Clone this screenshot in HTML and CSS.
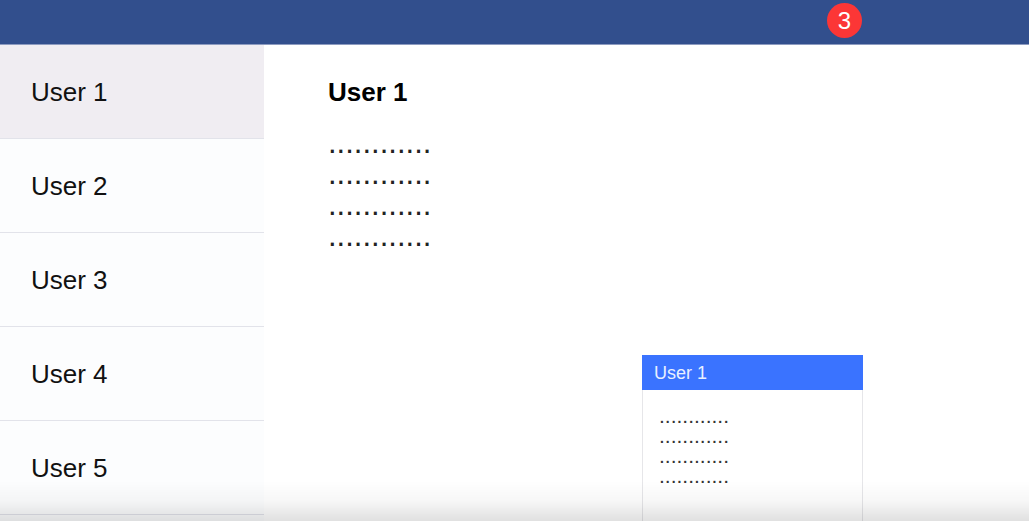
FILE: index.html
```html
<!DOCTYPE html>
<html lang="en">
<head>
<meta charset="utf-8">
<meta name="viewport" content="width=device-width, initial-scale=1">
<title>Messages</title>
<link rel="stylesheet" href="styles.css">
</head>
<body>
<header class="topbar"><span class="badge">3</span></header>
<div class="layout">
  <nav class="users">
    <button class="user user-active" type="button">User 1</button>
    <button class="user" type="button">User 2</button>
    <button class="user" type="button">User 3</button>
    <button class="user" type="button">User 4</button>
    <button class="user" type="button">User 5</button>
  </nav>
  <main class="thread">
    <h1 class="thread-title">User 1</h1>
    <p class="messages">............<br>............<br>............<br>............</p>
  </main>
</div>
<section class="chat">
  <h2 class="chat-title">User 1</h2>
  <p class="chat-messages">............<br>............<br>............<br>............</p>
</section>
<div class="shade"></div>
</body>
</html>
```
FILE: styles.css
```css
* {
  box-sizing: border-box;
}

body {
  display: flex;
  flex-direction: column;
  min-height: 100vh;
  margin: 0;
  background: #fff;
  color: #000;
  font-family: "Liberation Sans", Arial, sans-serif;
}

h1, h2, p {
  margin: 0;
}

.topbar {
  display: flex;
  justify-content: flex-end;
  padding: 3px 167px 6px 0;
  border-bottom: 1px solid #8d9bc0;
  background: #324f8d;
}

.badge {
  width: 35px;
  height: 35px;
  border-radius: 50%;
  background: #fc3636;
  color: #fff;
  font-size: 24px;
  line-height: 36px;
  text-align: center;
}

.layout {
  display: flex;
  flex: 1;
}

.users {
  display: flex;
  flex-direction: column;
  width: 264px;
  background: #fcfdfe;
}

.user {
  padding: 32px 31px 31px;
  border: 0;
  border-bottom: 1px solid #e2e3ea;
  background: none;
  color: #111;
  font: inherit;
  font-size: 26px;
  line-height: 30px;
  text-align: left;
}

.user-active {
  background: #f0edf2;
}

.thread {
  flex: 1;
  padding: 32px 64px;
}

.thread-title {
  font-size: 26px;
  line-height: 30px;
}

.messages {
  padding-top: 20px;
  color: #222;
  font-size: 31px;
  line-height: 31px;
}

.chat {
  position: fixed;
  right: 166px;
  bottom: 0;
  width: 221px;
  border: 1px solid #e6e6e9;
  border-top: 0;
  border-bottom: 0;
  background: #fff;
}

.chat-title {
  margin: 0 -1px;
  padding: 8px 12px 7px;
  background: #3a73ff;
  color: #e8f0ff;
  font-size: 18px;
  font-weight: 400;
  line-height: 20px;
}

.chat-messages {
  padding: 16px 16px 35px;
  color: #333;
  font-size: 21px;
  line-height: 20px;
}

.shade {
  position: fixed;
  right: 0;
  bottom: 0;
  left: 0;
  height: 40px;
  background: linear-gradient(rgba(0, 0, 0, 0), rgba(0, 0, 0, 0.03) 50%, rgba(0, 0, 0, 0.12));
  pointer-events: none;
}
```
